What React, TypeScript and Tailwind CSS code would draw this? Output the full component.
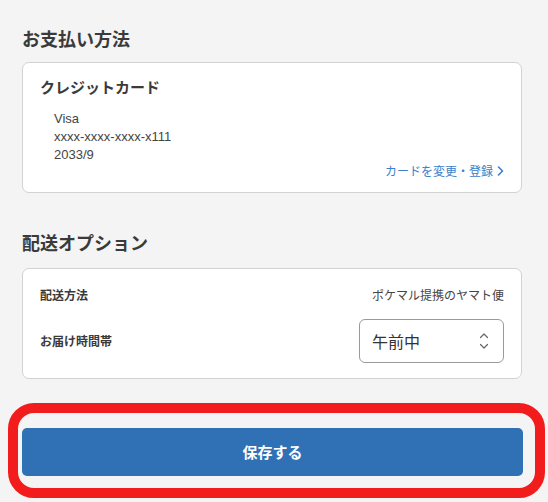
import React from 'react';

const font = { fontFamily: '"Noto Sans CJK JP", "Noto Sans", sans-serif' };
const latin = { fontFamily: '"Liberation Sans", "Noto Sans CJK JP", sans-serif' };

const SelectArrows = () => (
  <svg width="10" height="18" viewBox="0 0 10 18" fill="none" stroke="#666" strokeWidth="1.2" strokeLinecap="round" strokeLinejoin="round">
    <path d="M1.5 5.5 L5 2 L8.5 5.5" />
    <path d="M1.5 12.5 L5 16 L8.5 12.5" />
  </svg>
);

const ChevronRight = () => (
  <svg width="7" height="10" viewBox="0 0 7 10" fill="none" stroke="#3b80c6" strokeWidth="1.6" strokeLinecap="round" strokeLinejoin="round">
    <path d="M1.5 1 L5.5 5 L1.5 9" />
  </svg>
);

const App: React.FC = () => {
  return (
    <div className="min-h-[502px] bg-[#f4f4f4] pl-[22px] pr-[26px] pt-[26px] text-[#333]" style={font}>
      <h2 className="text-[18px] leading-[24px] font-bold text-[#3a3a3a]">お支払い方法</h2>

      <div className="mt-[12px] rounded-[7px] border border-[#d2d2d2] bg-white px-[17px] pt-[14px] pb-[14px]">
        <h3 className="text-[15px] leading-[20px] font-bold text-[#3a3a3a]">クレジットカード</h3>
        <div className="mt-[13px] ml-[14px] text-[13px] leading-[18px] text-[#444]" style={latin}>
          <p>Visa</p>
          <p>xxxx-xxxx-xxxx-x111</p>
          <p>2033/9</p>
        </div>
        <div className="flex justify-end">
          <a href="#" className="flex items-center gap-[4px] text-[12px] leading-[14px] text-[#3b80c6]">
            カードを変更・登録
            <ChevronRight />
          </a>
        </div>
      </div>

      <h2 className="mt-[37px] text-[18px] leading-[24px] font-bold text-[#3a3a3a]">配送オプション</h2>

      <div className="mt-[14px] rounded-[7px] border border-[#d2d2d2] bg-white px-[17px] pt-[18px] pb-[15px]">
        <div className="flex items-center justify-between text-[12px] leading-[16px]">
          <span className="font-bold text-[#3a3a3a]">配送方法</span>
          <span className="text-[#444]">ポケマル提携のヤマト便</span>
        </div>
        <div className="mt-[16px] flex items-center justify-between">
          <span className="text-[12px] leading-[16px] font-bold text-[#3a3a3a]">お届け時間帯</span>
          <div className="flex h-[44px] w-[145px] items-center justify-between rounded-[6px] border border-[#9a9a9a] pl-[12px] pr-[14px]">
            <span className="text-[16px] text-[#333]">午前中</span>
            <SelectArrows />
          </div>
        </div>
      </div>

      <div className="relative mt-[49px] mr-[-1px]">
        <button className="flex h-[48px] w-full items-center justify-center rounded-[5px] bg-[#3071b5] text-[15px] font-bold text-white">
          保存する
        </button>
        <div className="pointer-events-none absolute top-[-25px] bottom-[-22px] left-[-14px] right-[-22px] rounded-[26px] border-[10px] border-[#f21c1c]" />
      </div>
    </div>
  );
};

export default App;
